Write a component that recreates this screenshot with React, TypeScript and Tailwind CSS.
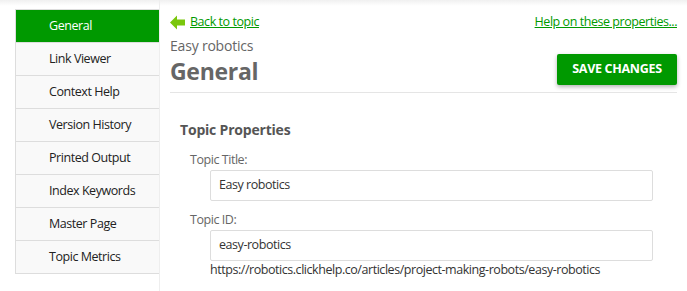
const menu = [
  "General",
  "Link Viewer",
  "Context Help",
  "Version History",
  "Printed Output",
  "Index Keywords",
  "Master Page",
  "Topic Metrics",
];

function BackArrow() {
  return (
    <svg width="15" height="15" viewBox="0 0 15 15" className="shrink-0">
      <path d="M0 7.5 L7 0.5 L7 4.5 L15 4.5 L15 10.5 L7 10.5 L7 14.5 Z" fill="#7ac70c" />
    </svg>
  );
}

export default function App() {
  return (
    <div
      className="relative w-[687px] h-[291px] overflow-hidden bg-white flex text-[12.5px] tracking-[-0.45px] text-[#333]"
      style={{ fontFamily: '"Open Sans", "Noto Sans", sans-serif' }}
    >
      {/* faint top shadow */}
      <div className="absolute top-0 left-0 right-0 h-[6px] bg-gradient-to-b from-[#f0f0f0] to-white pointer-events-none" />

      {/* Sidebar */}
      <div className="relative w-[160px] shrink-0 pl-[15px] pt-[9px] border-r border-[#eeeeee]">
        <div className="w-[144px] border-t border-l border-[#dddddd]">
          {menu.map((item, i) => (
            <div
              key={item}
              className={`h-[33px] flex items-center pl-[33px] border-b border-[#dddddd] ${
                i === 0 ? "bg-[#009900] text-white border-[#009900]" : "bg-[#f9f9f9] text-[#222]"
              }`}
            >
              {item}
            </div>
          ))}
        </div>
      </div>

      {/* Main */}
      <div className="relative flex-1 pl-[10px] pr-[10px] pt-[13px]">
        <div className="flex items-center justify-between h-[18px]">
          <a className="flex items-center gap-[5px] text-[#009900] underline cursor-pointer">
            <BackArrow />
            <span>Back to topic</span>
          </a>
          <a className="text-[#009900] underline cursor-pointer">Help on these properties...</a>
        </div>

        <div className="flex items-end justify-between border-b border-[#e5e5e5] pb-[6px]">
          <div>
            <div className="text-[14px] tracking-[-0.2px] text-[#666] mt-[5px] leading-[20px]">Easy robotics</div>
            <h1 className="text-[23px] tracking-[-0.3px] font-bold text-[#666] leading-[30px]">General</h1>
          </div>
          <button className="h-[31px] w-[120px] mb-[1px] bg-[#009900] text-white font-bold text-[12.5px] tracking-[-0.3px] rounded-[2px] shadow-[0_2px_4px_rgba(0,0,0,0.3)] uppercase">
            Save Changes
          </button>
        </div>

        <div className="pl-[10px] pt-[27px]">
          <div className="text-[14px] tracking-[-0.2px] font-bold text-[#555] leading-[20px]">Topic Properties</div>
          <div className="pl-[10px]">
            <div className="mt-[11px] text-[#666] leading-[18px]">Topic Title:</div>
            <div className="ml-[20px] mt-[1px] w-[443px] h-[31px] border border-[#dddddd] rounded-[2px] flex items-center pl-[8px] text-[#333]">
              Easy robotics
            </div>
            <div className="mt-[10px] text-[#666] leading-[18px]">Topic ID:</div>
            <div className="ml-[20px] mt-[1px] w-[443px] h-[31px] border border-[#dddddd] rounded-[2px] flex items-center pl-[8px] text-[#333]">
              easy-robotics
            </div>
            <div className="ml-[20px] text-[#333] leading-[18px]">
              https://robotics.clickhelp.co/articles/project-making-robots/easy-robotics
            </div>
          </div>
        </div>
      </div>
    </div>
  );
}
